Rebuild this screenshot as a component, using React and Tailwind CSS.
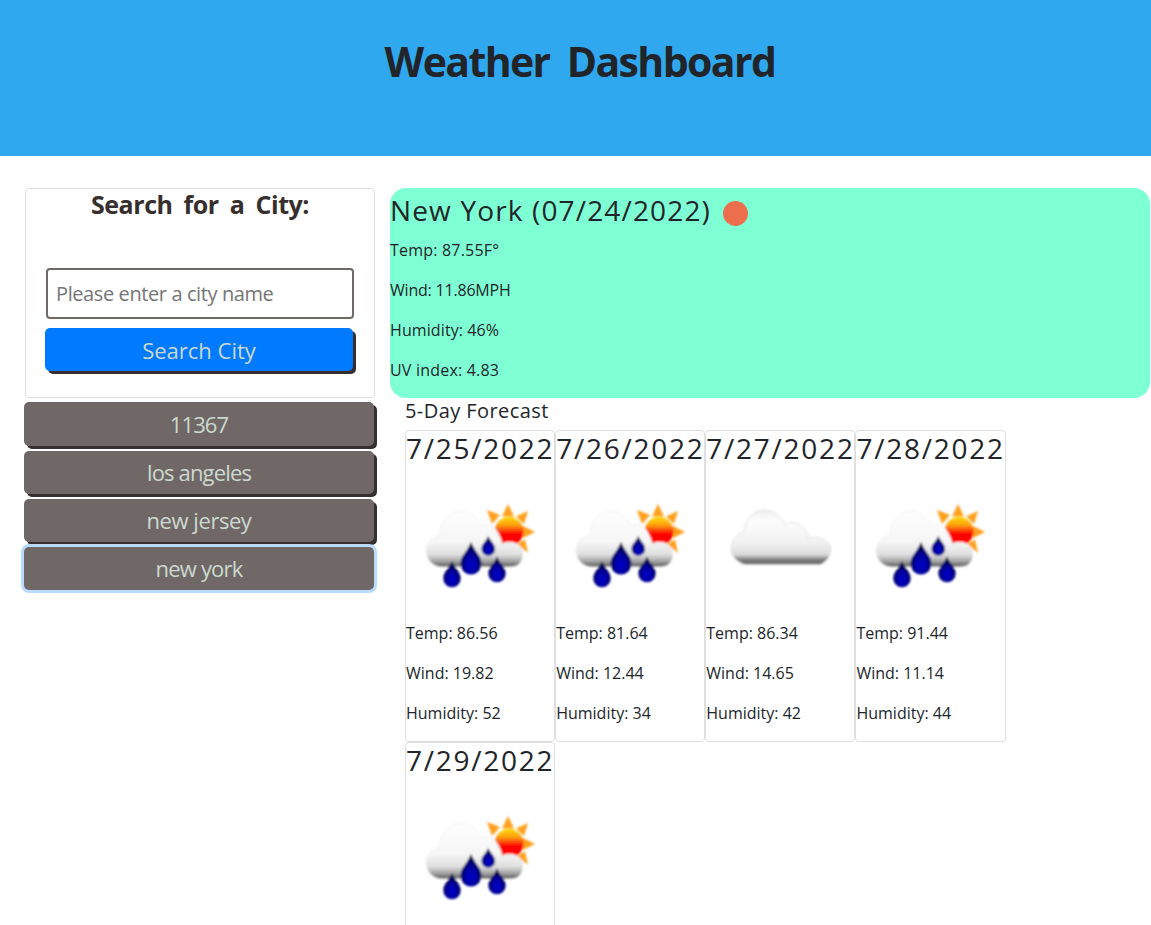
const days = [
  { date: "7/25/2022", temp: "86.56", wind: "19.82", humidity: "52", icon: "rain" },
  { date: "7/26/2022", temp: "81.64", wind: "12.44", humidity: "34", icon: "rain" },
  { date: "7/27/2022", temp: "86.34", wind: "14.65", humidity: "42", icon: "cloud" },
  { date: "7/28/2022", temp: "91.44", wind: "11.14", humidity: "44", icon: "rain" },
  { date: "7/29/2022", icon: "rain" },
];

const history = [
  { name: "11367", tracking: "tracking-[-0.9px]" },
  { name: "los angeles", tracking: "tracking-[-0.85px]" },
  { name: "new jersey", tracking: "tracking-[-0.45px]" },
  { name: "new york", tracking: "tracking-[-0.8px]", focused: true },
];

function Drop({ x, top, cy, r }) {
  return (
    <path
      fill="url(#drop)"
      d={`M${x} ${top}C${x + r * 0.35} ${top + r * 0.9} ${x + r} ${cy - r * 0.8} ${x + r} ${cy}A${r} ${r} 0 0 1 ${x - r} ${cy}C${x - r} ${cy - r * 0.8} ${x - r * 0.35} ${top + r * 0.9} ${x} ${top}Z`}
    />
  );
}

function RainIcon() {
  return (
    <svg viewBox="0 0 148 148" className="block h-[148px] w-[148px]">
      <defs>
        <linearGradient id="sun" x1="0" y1="0" x2="0" y2="1">
          <stop offset="0" stopColor="#ffd800" />
          <stop offset="0.28" stopColor="#ffa010" />
          <stop offset="0.48" stopColor="#fb3c08" />
          <stop offset="0.58" stopColor="#ff0000" />
          <stop offset="1" stopColor="#ff0000" />
        </linearGradient>
        <linearGradient id="shade" x1="0" y1="0" x2="0" y2="1">
          <stop offset="0" stopColor="#fefefe" />
          <stop offset="0.55" stopColor="#f6f6f6" />
          <stop offset="0.78" stopColor="#dedede" />
          <stop offset="0.9" stopColor="#a4a4a4" />
          <stop offset="1" stopColor="#505050" />
        </linearGradient>
        <radialGradient id="drop" cx="0.5" cy="0.7" r="0.6">
          <stop offset="0" stopColor="#0000d0" />
          <stop offset="0.5" stopColor="#00009c" />
          <stop offset="1" stopColor="#000038" />
        </radialGradient>
        <filter id="soft" x="-5%" y="-5%" width="110%" height="110%">
          <feGaussianBlur stdDeviation="0.9" />
        </filter>
      </defs>
      <g filter="url(#soft)">
        <path
          fill="#ffa01a"
          d="M102 31L108 43.5H96ZM122 38L118 51L110 43.5ZM129 59L117 65V53ZM122 80L111 71L119 66.5ZM81 37L94 42L86 51Z"
        />
        <circle cx="103" cy="58.5" r="14.5" fill="url(#sun)" />
        <path
          fill="url(#shade)"
          stroke="#f2f2f2"
          strokeWidth="1"
          d="M34 94C26 93 20 86 20 78C20 70 25 64 33 62C35 48 43 38 55 38C64 38 71 44 75 53C81 49 87 51 90 57C93 61 95 66 96 71C106 66 117 72 117 81C117 88 113 94 105 94Z"
        />
        <Drop x={65} top={69} cy={91} r={10.5} />
        <Drop x={82.3} top={63} cy={76} r={6.8} />
        <Drop x={46} top={88} cy={105.5} r={8.7} />
        <Drop x={91} top={83.5} cy={100.5} r={8.7} />
      </g>
    </svg>
  );
}

function CloudIcon() {
  return (
    <svg viewBox="0 0 148 148" className="-ml-px block h-[148px] w-[148px]">
      <defs>
        <linearGradient id="cloud" x1="0" y1="0" x2="0" y2="1">
          <stop offset="0" stopColor="#efefef" />
          <stop offset="0.2" stopColor="#fcfcfc" />
          <stop offset="0.6" stopColor="#f2f2f2" />
          <stop offset="0.82" stopColor="#dadada" />
          <stop offset="0.91" stopColor="#808080" />
          <stop offset="1" stopColor="#606060" />
        </linearGradient>
        <filter id="mist" x="-5%" y="-5%" width="110%" height="110%">
          <feGaussianBlur stdDeviation="1" />
        </filter>
      </defs>
      <g filter="url(#mist)">
        <path
          fill="url(#cloud)"
          stroke="#d8d8d8"
          strokeWidth="1"
          strokeOpacity="0.7"
          d="M40 91.500C32 89 26 83 26 76C26 68 31 61 39 58.500C40 46 48 37 59 37C68 37 76 42 80 52C90 46 101 52 103.500 65C115 62 126 68 126 77C125 84 121 89 115 91.500Z"
        />
      </g>
    </svg>
  );
}

export default function App() {
  return (
    <div className="h-[925px] overflow-hidden bg-white font-['Comic_Sans_MS','Open_Sans',sans-serif] text-base text-[#212529]">
      <header className="h-[156px] bg-[#2fa8f0] pt-9 pl-[9px] text-center text-[41px] leading-[50px] font-bold tracking-[-1.6px] [word-spacing:8px]">
        <h1>Weather Dashboard</h1>
      </header>
      <main className="flex pt-8">
        <aside className="w-[390px] shrink-0 pl-6">
          <section className="ml-px h-[210px] w-[350px] rounded border border-[#dfdfdf] px-5">
            <h2 className="text-center text-[25px] leading-[31px] font-bold tracking-[-0.45px] text-[#372e2e] [word-spacing:5px]">
              Search for a City:
            </h2>
            <input
              placeholder="Please enter a city name"
              className="mt-12 block h-[51px] w-[308px] rounded border-2 border-[#706866] px-2 text-[20px] tracking-[-0.4px] placeholder:text-[#757575]"
            />
            <button className="mt-[9px] -ml-px block h-[43px] w-[308px] rounded-[5px] bg-[#007bff] pt-px text-[22px] text-[#ccd8d0] shadow-[3px_3px_0_#372e2e]">
              Search City
            </button>
          </section>
          <nav className="mt-[4.400px] flex w-[350px] flex-col gap-[4.800px]">
            {history.map((c) => (
              <button
                key={c.name}
                className={`h-[43.400px] rounded-[5px] bg-[#706866] text-[22px] text-[#ccd8d0] ${c.tracking} ${c.focused ? "shadow-[0_0_0_3px_#b9dbff]" : "shadow-[3px_3px_0_#372e2e]"}`}
              >
                {c.name}
              </button>
            ))}
          </nav>
        </aside>
        <div className="w-[761px] shrink-0">
          <section className="mr-px h-[210px] rounded-2xl bg-[#7fffd4]">
            <div className="flex h-[50px] items-center">
              <h2 className="pb-[6px] text-[28px] leading-[44px] tracking-[1.15px]">New York (07/24/2022)</h2>
              <span className="ml-3 size-[25px] rounded-full bg-[#ec6e4c]" />
            </div>
            <p className="mb-4 tracking-[0.2px]">Temp: 87.55F°</p>
            <p className="mb-4 tracking-[-0.2px]">Wind: 11.86MPH</p>
            <p className="mb-4 tracking-[0.1px]">Humidity: 46%</p>
            <p className="tracking-[0.2px]">UV index: 4.83</p>
          </section>
          <section className="pl-[15px]">
            <h3 className="h-8 pt-px text-[20px] leading-6 tracking-[0.42px]">5-Day Forecast</h3>
            <div className="flex flex-wrap pr-[100px]">
              {days.map((d) => (
                <article key={d.date} className="h-[312px] w-[150.150px] shrink-0 rounded border border-[#dfdfdf]">
                  <h4 className="mb-2 text-[28px] leading-[34px] tracking-[1.75px] whitespace-nowrap">{d.date}</h4>
                  {d.icon === "rain" ? <RainIcon /> : <CloudIcon />}
                  {d.temp && (
                    <div className="flex flex-col gap-4">
                      <p>Temp: {d.temp}</p>
                      <p>Wind: {d.wind}</p>
                      <p>Humidity: {d.humidity}</p>
                    </div>
                  )}
                </article>
              ))}
            </div>
          </section>
        </div>
      </main>
    </div>
  );
}
